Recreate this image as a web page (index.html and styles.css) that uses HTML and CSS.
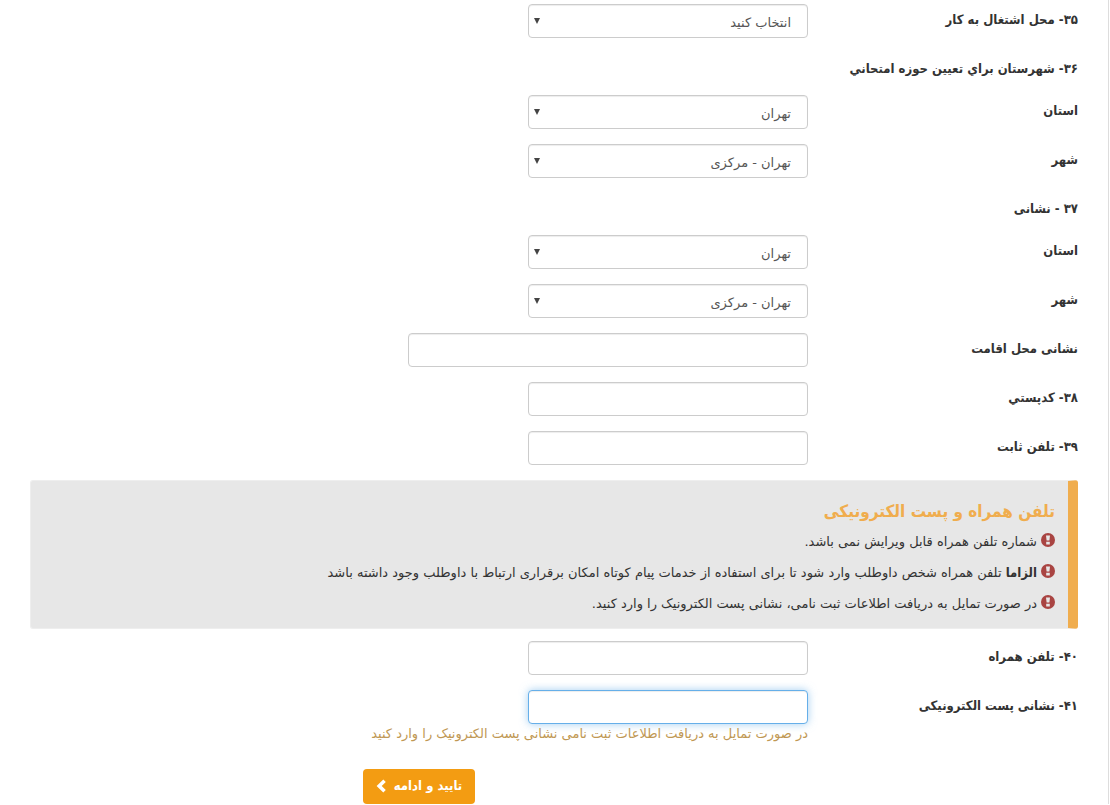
FILE: index.html
```html
<!DOCTYPE html>
<html lang="fa" dir="rtl">
<head>
    <meta charset="UTF-8">
    <meta name="viewport" content="width=device-width, initial-scale=1.0">
    <title>فرم ثبت نام</title>
    <link rel="stylesheet" href="styles.css">
</head>
<body>

    <form class="form-container">
        <div class="form-group">
            <label class="control-label" for="workPlace">۳۵- محل اشتغال به کار</label>
            <div class="control">
                <div class="select-box">
                    <select class="form-control" id="workPlace">
                        <option>انتخاب کنید</option>
                    </select>
                </div>
            </div>
        </div>

        <div class="form-group">
            <div class="control-label">۳۶- شهرستان براي تعیین حوزه امتحاني</div>
        </div>
        <div class="form-group">
            <label class="control-label" for="examProvince">استان</label>
            <div class="control">
                <div class="select-box">
                    <select class="form-control" id="examProvince">
                        <option>تهران</option>
                    </select>
                </div>
            </div>
        </div>
        <div class="form-group">
            <label class="control-label" for="examCity">شهر</label>
            <div class="control">
                <div class="select-box">
                    <select class="form-control" id="examCity">
                        <option>تهران - مرکزی</option>
                    </select>
                </div>
            </div>
        </div>

        <div class="form-group">
            <div class="control-label">۳۷ - نشانی</div>
        </div>
        <div class="form-group">
            <label class="control-label" for="homeProvince">استان</label>
            <div class="control">
                <div class="select-box">
                    <select class="form-control" id="homeProvince">
                        <option>تهران</option>
                    </select>
                </div>
            </div>
        </div>
        <div class="form-group">
            <label class="control-label" for="homeCity">شهر</label>
            <div class="control">
                <div class="select-box">
                    <select class="form-control" id="homeCity">
                        <option>تهران - مرکزی</option>
                    </select>
                </div>
            </div>
        </div>
        <div class="form-group">
            <label class="control-label" for="address">نشانی محل اقامت</label>
            <div class="control">
                <input type="text" class="form-control wide" id="address">
            </div>
        </div>
        <div class="form-group">
            <label class="control-label" for="postalCode">۳۸- کدپستي</label>
            <div class="control">
                <input type="text" class="form-control" id="postalCode">
            </div>
        </div>
        <div class="form-group">
            <label class="control-label" for="phone">۳۹- تلفن ثابت</label>
            <div class="control">
                <input type="text" class="form-control" id="phone">
            </div>
        </div>

        <div class="callout">
            <h4>تلفن همراه و پست الکترونیکی</h4>
            <p>
                <svg class="icon-warn" viewBox="0 0 14 14" aria-hidden="true"><circle cx="7" cy="7" r="7"/><path d="M5 2.5h4L8.4 7.6H5.6zM5.2 8.8h3.6v2.6H5.2z"/></svg>
                <span>شماره تلفن همراه قابل ویرایش نمی باشد.</span>
            </p>
            <p>
                <svg class="icon-warn" viewBox="0 0 14 14" aria-hidden="true"><circle cx="7" cy="7" r="7"/><path d="M5 2.5h4L8.4 7.6H5.6zM5.2 8.8h3.6v2.6H5.2z"/></svg>
                <span><b>الزاما</b> تلفن همراه شخص داوطلب وارد شود تا برای استفاده از خدمات پیام کوتاه امکان برقراری ارتباط با داوطلب وجود داشته باشد</span>
            </p>
            <p>
                <svg class="icon-warn" viewBox="0 0 14 14" aria-hidden="true"><circle cx="7" cy="7" r="7"/><path d="M5 2.5h4L8.4 7.6H5.6zM5.2 8.8h3.6v2.6H5.2z"/></svg>
                <span>در صورت تمایل به دریافت اطلاعات ثبت نامی، نشانی پست الکترونیک را وارد کنید.</span>
            </p>
        </div>

        <div class="form-group">
            <label class="control-label" for="mobile">۴۰- تلفن همراه</label>
            <div class="control">
                <input type="tel" class="form-control" id="mobile">
            </div>
        </div>
        <div class="form-group">
            <label class="control-label" for="email">۴۱- نشانی پست الکترونیکی</label>
            <div class="control">
                <input type="email" class="form-control active" id="email" aria-describedby="emailHelp">
                <div class="help-text" id="emailHelp">در صورت تمایل به دریافت اطلاعات ثبت نامی نشانی پست الکترونیک را وارد کنید</div>
            </div>
        </div>

        <div class="form-actions">
            <button type="submit" class="btn">
                تایید و ادامه
                <svg class="icon-next" viewBox="0 0 10 14" aria-hidden="true"><path d="M9.8 2.9 7.3.4.6 7l6.7 6.6 2.5-2.5L5.7 7z"/></svg>
            </button>
        </div>
    </form>

</body>
</html>
```

FILE: styles.css
```css
* {
    box-sizing: border-box;
}

body {
    margin: 0;
    background: #fff;
    color: #333;
    font-family: 'DejaVu Sans', sans-serif;
    font-size: 13px;
    line-height: 20px;
}

.control-label,
.callout h4,
.callout b,
.btn {
    font-family: 'DejaVu Sans Condensed', 'DejaVu Sans', sans-serif;
    font-weight: bold;
}

.form-container {
    margin: 0 1px;
    padding: 4px 30px 0 29px;
    border-right: 1px solid #ddd;
}

.form-group {
    display: flex;
    gap: 30px;
    margin-bottom: 15px;
}

.control-label {
    flex: 0 0 240px;
    padding: 6px 0 1px;
    white-space: nowrap;
}

.control {
    flex: 1;
}

.form-control {
    display: block;
    width: 280px;
    height: 34px;
    padding: 6px 12px;
    border: 1px solid #ccc;
    border-radius: 4px;
    background: #fff;
    box-shadow: inset 0 1px 1px rgba(0, 0, 0, 0.075);
    color: #555;
    font: inherit;
}

.form-control.wide {
    width: 400px;
}

.form-control.active,
.form-control:focus {
    border-color: #66afe9;
    outline: 0;
    box-shadow: inset 0 1px 1px rgba(0, 0, 0, 0.075), 0 0 8px rgba(102, 175, 233, 0.6);
}

/* Drop-downs */
.select-box {
    position: relative;
    width: 280px;
}

.select-box select {
    appearance: none;
    padding: 8px 16px 4px;
}

.select-box::after {
    content: "";
    position: absolute;
    left: 6px;
    top: 14px;
    border: 3px solid transparent;
    border-top: 6px solid #444;
    border-bottom: 0;
    pointer-events: none;
}

/* Notice box */
.callout {
    margin-bottom: 12px;
    padding: 20px 13px 9px;
    border: 1px solid #eee;
    border-right: 10px solid #f0ad4e;
    border-radius: 3px;
    background: #e7e7e7;
}

.callout h4 {
    margin: 0 0 5px;
    color: #f0ad4e;
    font-size: 17px;
    line-height: 20px;
}

.callout p {
    display: flex;
    align-items: center;
    gap: 4px;
    margin: 0;
    line-height: 31px;
}

.icon-warn {
    width: 14px;
    height: 14px;
    margin-bottom: 3px;
}

.icon-warn circle {
    fill: #a94442;
}

.icon-warn path {
    fill: #e7e7e7;
}

.help-text {
    color: #c09853;
}

.form-actions {
    display: flex;
    justify-content: center;
    margin-right: 270px;
    padding-top: 10px;
}

.btn {
    display: flex;
    align-items: center;
    gap: 8px;
    height: 35px;
    padding: 0 13px 2px;
    border: 0;
    border-radius: 4px;
    background: #f39c12;
    color: #fff;
    font-size: 13px;
    line-height: 20px;
    cursor: pointer;
}

.icon-next {
    width: 10px;
    height: 14px;
    fill: #fff;
}
```
